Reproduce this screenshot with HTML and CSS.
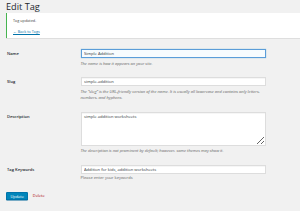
FILE: index.html
```html
<!DOCTYPE html>
<html lang="en">
<head>
<meta charset="utf-8">
<title>Edit Tag</title>
<link rel="stylesheet" href="styles.css">
</head>
<body>
<div class="wrap">
  <h1 class="title">Edit Tag</h1>
  <div class="notice">
    <p class="notice-line">Tag updated.</p>
    <p class="notice-line"><a class="back-link" href="#">← Back to Tags</a></p>
  </div>
  <form class="form">
    <div class="row">
      <label class="label">Name</label>
      <div class="field">
        <input class="input input-focus" type="text" value="Simple Addition">
        <p class="description">The name is how it appears on your site.</p>
      </div>
    </div>
    <div class="row">
      <label class="label">Slug</label>
      <div class="field">
        <input class="input" type="text" value="simple-addition">
        <p class="description">The “slug” is the URL-friendly version of the name. It is usually all lowercase and contains only letters, numbers, and hyphens.</p>
      </div>
    </div>
    <div class="row">
      <label class="label label-top">Description</label>
      <div class="field">
        <textarea class="textarea">simple addition worksheets</textarea>
        <p class="description">The description is not prominent by default; however, some themes may show it.</p>
      </div>
    </div>
    <div class="row">
      <label class="label">Tag Keywords</label>
      <div class="field">
        <input class="input" type="text" value="Addition for kids, addition worksheets">
        <p class="description plain">Please enter your keywords</p>
      </div>
    </div>
    <div class="actions">
      <button class="button" type="button">Update</button>
      <a class="delete" href="#">Delete</a>
    </div>
  </form>
</div>
</body>
</html>
```

FILE: styles.css
```css
html, body {
  margin: 0;
  padding: 0;
}
body {
  background: #f1f1f1;
  font-family: "Open Sans", "Noto Sans", sans-serif;
  color: #444;
  width: 300px;
  height: 211px;
  overflow: hidden;
}
.wrap {
  padding: 0 0 0 6px;
}
.title {
  margin: 0;
  padding: 1.5px 0 0 0;
  height: 10.5px;
  font-size: 9.2px;
  line-height: 10.5px;
  font-weight: 400;
  color: #23282d;
}
.notice {
  margin-top: 1px;
  background: #fff;
  border-left: 1.2px solid #46b450;
  box-shadow: 0 0.5px 0.5px rgba(0,0,0,0.08);
  padding: 5px 0 2.5px 6px;
  height: 17.5px;
}
.notice-line {
  margin: 0;
  font-size: 3.8px;
  line-height: 5px;
  color: #444;
}
.notice-line + .notice-line {
  margin-top: 5.5px;
}
.back-link {
  color: #0073aa;
  text-decoration: underline;
}
.form {
  padding-top: 11.3px;
}
.row {
  display: grid;
  grid-template-columns: 74.5px 186px;
  margin-bottom: 10px;
}
.label {
  padding: 2.2px 0 0 1px;
  font-size: 4.1px;
  line-height: 5px;
  font-weight: 600;
  color: #23282d;
}
.label-top {
  padding-top: 2.4px;
}
.field {
  display: flex;
  flex-direction: column;
}
.input, .textarea {
  box-sizing: border-box;
  width: 185.5px;
  margin: 0;
  font-family: "Open Sans", "Noto Sans", sans-serif;
  font-size: 4.1px;
  color: #32373c;
  background: #fff;
  border: 0.5px solid #ddd;
  box-shadow: inset 0 0.4px 0.6px rgba(0,0,0,0.07);
  outline: none;
}
.input {
  height: 9px;
  padding: 0 2.5px;
  line-height: 8px;
}
.input-focus {
  border-color: #5b9dd9;
  background: #f7fcfe;
  box-shadow: 0 0 0.8px rgba(30,140,190,0.8);
}
.textarea {
  height: 34px;
  padding: 1.5px 2.5px;
  line-height: 5.5px;
  resize: vertical;
}
.description {
  margin: 2.6px 0 0 0;
  font-size: 4.05px;
  line-height: 6.4px;
  font-style: italic;
  color: #666;
  width: 185px;
}
.description.plain {
  font-style: normal;
  margin-top: 1.5px;
}
.actions {
  display: flex;
  align-items: center;
  gap: 4.5px;
}
.button {
  height: 8.5px;
  padding: 0 3.5px;
  background: #0085ba;
  border: 0.5px solid #0073aa;
  border-radius: 1px;
  box-shadow: 0 0.5px 0 #006799;
  color: #fff;
  font-family: "Open Sans", "Noto Sans", sans-serif;
  font-size: 3.9px;
  line-height: 7.5px;
}
.delete {
  color: #a00;
  font-size: 3.9px;
  text-decoration: none;
}
```
